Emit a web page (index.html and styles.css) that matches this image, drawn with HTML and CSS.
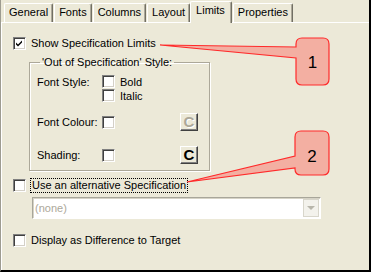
FILE: index.html
```html
<!DOCTYPE html>
<html lang="en">
<head>
  <meta charset="UTF-8" />
  <title>Limits</title>
  <link rel="stylesheet" href="styles.css">
</head>
<body>
  <div class="window">
    <!-- Tab strip -->
    <div class="tabs">
      <div class="tab">General</div>
      <div class="tab">Fonts</div>
      <div class="tab">Columns</div>
      <div class="tab">Layout</div>
      <div class="tab active">Limits</div>
      <div class="tab">Properties</div>
    </div>

    <div class="panel">
      <div class="check-row">
        <span class="cb"><svg viewBox="0 0 11 11" width="11" height="11"><path d="M2 4.5l2 2 4-4v2l-4 4-2-2z" fill="#000"/></svg></span>
        <span class="check-label">Show Specification Limits</span>
      </div>

      <fieldset class="group">
        <legend>'Out of Specification' Style:</legend>
        <div class="group-row row-style">
          <span class="field-label">Font Style:</span>
          <span class="cb"></span>
          <span class="opt">Bold</span>
        </div>
        <div class="group-row row-italic">
          <span class="field-label"></span>
          <span class="cb"></span>
          <span class="opt">Italic</span>
        </div>
        <div class="group-row row-colour">
          <span class="field-label">Font Colour:</span>
          <span class="cb"></span>
          <span class="btn disabled">C</span>
        </div>
        <div class="group-row row-shading">
          <span class="field-label">Shading:</span>
          <span class="cb"></span>
          <span class="btn">C</span>
        </div>
      </fieldset>

      <div class="check-row row-alt">
        <span class="cb"></span>
        <span class="check-label focus">Use an alternative Specification</span>
      </div>

      <div class="select">
        <span class="select-text">(none)</span>
        <span class="select-btn"><span class="arrow"></span></span>
      </div>

      <div class="check-row row-diff">
        <span class="cb"></span>
        <span class="check-label">Display as Difference to Target</span>
      </div>
    </div>

    <!-- Numbered callouts drawn over the dialog -->
    <svg class="callouts" width="376" height="275" viewBox="0 0 376 275">
      <path class="bubble" d="M302 38H323Q329 38 329 44V79Q329 85 323 85H302Q296 85 296 79V58L160 45L296 47V44Q296 38 302 38Z"/>
      <text class="num" x="312.5" y="68">1</text>
      <path class="bubble" d="M301 131H323Q329 131 329 137V169Q329 175 323 175H301Q295 175 295 169V168L187 182L295 156V137Q295 131 301 131Z"/>
      <text class="num" x="312" y="162">2</text>
    </svg>
  </div>
</body>
</html>
```

FILE: styles.css
```css
* {
  box-sizing: border-box;
}

body {
  margin: 0;
  background: #fff;
  font-family: 'Liberation Sans', Arial, sans-serif;
  font-size: 11px;
  color: #000;
}

.window {
  position: relative;
  width: 371px;
  height: 272px;
  background: #ECE9D8;
  border-left: 1px solid #9d9b90;
  border-right: 2px solid #000;
  border-bottom: 2px solid #000;
  display: flex;
  flex-direction: column;
}

/* Tabs */
.tabs {
  display: flex;
  align-items: flex-end;
  gap: 1px;
  height: 22px;
  padding-left: 3px;
}

.tab {
  height: 19px;
  padding: 2px 4px 0 4px;
  line-height: 13px;
  border-top: 1px solid #fff;
  border-left: 1px solid #fff;
  border-right: 1px solid #716F64;
  box-shadow: inset -1px 0 #ACA899;
  border-radius: 2px 2px 0 0;
  white-space: nowrap;
}

.tab.active {
  position: relative;
  z-index: 1;
  height: 22px;
  margin: 0 0 -1px -1px;
  padding: 2px 6px 0 5px;
  background: #ECE9D8;
}

/* Page */
.panel {
  flex: 1;
  border-top: 1px solid #fff;
  border-left: 1px solid #fff;
  padding: 14px 0 0 11px;
}

.check-row {
  display: flex;
  align-items: center;
  height: 13px;
}

.cb {
  flex: none;
  width: 13px;
  height: 13px;
  background: #fff;
  border: 1px solid;
  border-color: #808080 #fff #fff #808080;
  box-shadow: inset 1px 1px #404040, inset -1px -1px #d4d0c8;
  display: flex;
  align-items: center;
  justify-content: center;
}

.check-label {
  margin-left: 5px;
  line-height: 13px;
  white-space: nowrap;
}

.check-label.focus {
  margin-left: 4px;
  padding: 0 1px;
  border: 1px dotted #000;
}

/* Group box */
.group {
  width: 181px;
  margin: 6px 0 0 16px;
  padding: 6px 11px 6px 7px;
  border: 1px solid #ACA899;
  box-shadow: inset 1px 1px #fff, 1px 1px #fff;
}

.group legend {
  margin-left: 3px;
  padding: 0 2px;
  line-height: 13px;
}

.group-row {
  display: flex;
  align-items: center;
  height: 13px;
}

.row-italic {
  margin-top: 1px;
}

.row-colour {
  height: 18px;
  margin-top: 11px;
}

.row-shading {
  height: 18px;
  margin-top: 15px;
}

.field-label {
  width: 65px;
  flex: none;
}

.opt {
  margin-left: 5px;
}

.btn {
  margin-left: auto;
  width: 18px;
  height: 18px;
  border: 1px solid;
  border-color: #fff #404040 #404040 #fff;
  box-shadow: inset -1px -1px #808080;
  font-size: 15px;
  font-weight: bold;
  line-height: 15px;
  text-align: center;
}

.btn.disabled {
  color: #ACA899;
  text-shadow: 1px 1px #fff;
}

.row-alt {
  height: 15px;
  margin-top: 7px;
}

/* Disabled combo box */
.select {
  display: flex;
  align-items: center;
  width: 289px;
  height: 22px;
  margin: 4px 0 0 19px;
  background: #fff;
  border: 1px solid;
  border-color: #a8a69a #fff #fff #a8a69a;
  box-shadow: inset 1px 1px #d6d3c6;
}

.select-text {
  flex: 1;
  padding-left: 2px;
  color: #ACA899;
}

.select-btn {
  width: 16px;
  height: 18px;
  margin-right: 1px;
  background: #f3f2ec;
  border: 1px solid #d8d6cb;
  display: flex;
  align-items: center;
  justify-content: center;
}

.arrow {
  width: 0;
  height: 0;
  border-left: 4px solid transparent;
  border-right: 4px solid transparent;
  border-top: 4px solid #b8b6ab;
}

.row-diff {
  margin-top: 15px;
}

/* Callouts */
.callouts {
  position: absolute;
  top: 0;
  left: -1px;
  pointer-events: none;
}

.bubble {
  fill: #F3AFA2;
  stroke: #FF2A2A;
  stroke-width: 1.2;
}

.num {
  font-family: 'Liberation Sans', Arial, sans-serif;
  font-size: 17px;
  text-anchor: middle;
}
```
